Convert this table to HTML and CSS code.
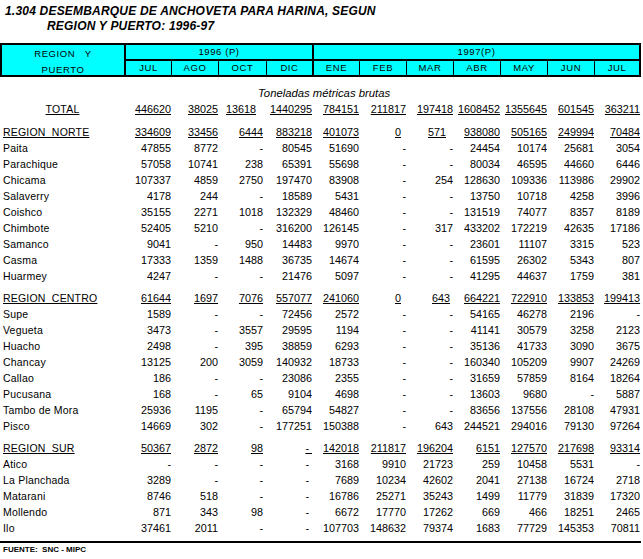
FILE: index.html
```html
<!DOCTYPE html>
<html lang="es">
<head>
<meta charset="utf-8">
<title>Desembarque de anchoveta para harina</title>
<link rel="stylesheet" href="styles.css">
</head>
<body>
<div class="page">
  <div class="title">
    <div class="t1">1.304 DESEMBARQUE DE ANCHOVETA PARA HARINA, SEGUN</div>
    <div class="t2">REGION Y PUERTO: 1996-97</div>
  </div>

  <div class="head">
    <div class="h-region">REGION   Y<br>PUERTO</div>
    <div class="h-year y96">1996 (P)</div>
    <div class="h-year y97">1997(P)</div>
    <div class="h-m thick">JUL</div>
    <div class="h-m">AGO</div>
    <div class="h-m">OCT</div>
    <div class="h-m">DIC</div>
    <div class="h-m thick">ENE</div>
    <div class="h-m">FEB</div>
    <div class="h-m">MAR</div>
    <div class="h-m">ABR</div>
    <div class="h-m">MAY</div>
    <div class="h-m">JUN</div>
    <div class="h-m">JUL</div>
  </div>

  <table class="data">
    <colgroup>
      <col class="c-lab"><col class="c-n46"><col class="c-n47"><col class="c-n47"><col class="c-n47"><col class="c-n47"><col class="c-n47"><col class="c-n47"><col class="c-n47"><col class="c-n47"><col class="c-n47"><col class="c-n46">
    </colgroup>
    <tbody>
      <tr class="units"><td colspan="12">Toneladas métricas brutas</td></tr>
      <tr class="sub"><td class="lab total">TOTAL</td><td>446620</td><td>38025</td><td class="oct far">13618</td><td>1440295</td><td>784151</td><td>211817</td><td>197418</td><td>1608452</td><td>1355645</td><td>601545</td><td>363211</td></tr>
      <tr class="gap g7"><td colspan="12"></td></tr>
      <tr class="sub"><td class="lab">REGION  NORTE</td><td>334609</td><td>33456</td><td class="oct">6444</td><td>883218</td><td>401073</td><td class="in5">0</td><td class="in7">571</td><td>938080</td><td>505165</td><td>249994</td><td>70484</td></tr>
      <tr><td class="lab">Paita</td><td>47855</td><td>8772</td><td class="oct">-</td><td>80545</td><td>51690</td><td>-</td><td>-</td><td>24454</td><td>10174</td><td>25681</td><td>3054</td></tr>
      <tr><td class="lab">Parachique</td><td>57058</td><td>10741</td><td class="oct">238</td><td>65391</td><td>55698</td><td>-</td><td>-</td><td>80034</td><td>46595</td><td>44660</td><td>6446</td></tr>
      <tr><td class="lab">Chicama</td><td>107337</td><td>4859</td><td class="oct">2750</td><td>197470</td><td>83908</td><td>-</td><td>254</td><td>128630</td><td>109336</td><td>113986</td><td>29902</td></tr>
      <tr><td class="lab">Salaverry</td><td>4178</td><td>244</td><td class="oct">-</td><td>18589</td><td>5431</td><td>-</td><td>-</td><td>13750</td><td>10718</td><td>4258</td><td>3996</td></tr>
      <tr><td class="lab">Coishco</td><td>35155</td><td>2271</td><td class="oct">1018</td><td>132329</td><td>48460</td><td>-</td><td>-</td><td>131519</td><td>74077</td><td>8357</td><td>8189</td></tr>
      <tr><td class="lab">Chimbote</td><td>52405</td><td>5210</td><td class="oct">-</td><td>316200</td><td>126145</td><td>-</td><td>317</td><td>433202</td><td>172219</td><td>42635</td><td>17186</td></tr>
      <tr><td class="lab">Samanco</td><td>9041</td><td>-</td><td class="oct">950</td><td>14483</td><td>9970</td><td>-</td><td>-</td><td>23601</td><td>11107</td><td>3315</td><td>523</td></tr>
      <tr><td class="lab">Casma</td><td>17333</td><td>1359</td><td class="oct">1488</td><td>36735</td><td>14674</td><td>-</td><td>-</td><td>61595</td><td>26302</td><td>5343</td><td>807</td></tr>
      <tr><td class="lab">Huarmey</td><td>4247</td><td>-</td><td class="oct">-</td><td>21476</td><td>5097</td><td>-</td><td>-</td><td>41295</td><td>44637</td><td>1759</td><td>381</td></tr>
      <tr class="gap g6"><td colspan="12"></td></tr>
      <tr class="sub"><td class="lab">REGION  CENTRO</td><td>61644</td><td>1697</td><td class="oct">7076</td><td>557077</td><td>241060</td><td class="in5">0</td><td class="in3">643</td><td>664221</td><td>722910</td><td>133853</td><td>199413</td></tr>
      <tr><td class="lab">Supe</td><td>1589</td><td>-</td><td class="oct">-</td><td>72456</td><td>2572</td><td>-</td><td>-</td><td>54165</td><td>46278</td><td>2196</td><td>-</td></tr>
      <tr><td class="lab">Vegueta</td><td>3473</td><td>-</td><td class="oct">3557</td><td>29595</td><td>1194</td><td>-</td><td>-</td><td>41141</td><td>30579</td><td>3258</td><td>2123</td></tr>
      <tr><td class="lab">Huacho</td><td>2498</td><td>-</td><td class="oct">395</td><td>38859</td><td>6293</td><td>-</td><td>-</td><td>35136</td><td>41733</td><td>3090</td><td>3675</td></tr>
      <tr><td class="lab">Chancay</td><td>13125</td><td>200</td><td class="oct">3059</td><td>140932</td><td>18733</td><td>-</td><td>-</td><td>160340</td><td>105209</td><td>9907</td><td>24269</td></tr>
      <tr><td class="lab">Callao</td><td>186</td><td>-</td><td class="oct">-</td><td>23086</td><td>2355</td><td>-</td><td>-</td><td>31659</td><td>57859</td><td>8164</td><td>18264</td></tr>
      <tr><td class="lab">Pucusana</td><td>168</td><td>-</td><td class="oct">65</td><td>9104</td><td>4698</td><td>-</td><td>-</td><td>13603</td><td>9680</td><td>-</td><td>5887</td></tr>
      <tr><td class="lab">Tambo de Mora</td><td>25936</td><td>1195</td><td class="oct">-</td><td>65794</td><td>54827</td><td>-</td><td>-</td><td>83656</td><td>137556</td><td>28108</td><td>47931</td></tr>
      <tr><td class="lab">Pisco</td><td>14669</td><td>302</td><td class="oct">-</td><td>177251</td><td>150388</td><td>-</td><td>643</td><td>244521</td><td>294016</td><td>79130</td><td>97264</td></tr>
      <tr class="gap g6"><td colspan="12"></td></tr>
      <tr class="sub"><td class="lab">REGION  SUR</td><td>50367</td><td>2872</td><td class="oct">98</td><td>-&nbsp;</td><td>142018</td><td>211817</td><td>196204</td><td>6151</td><td>127570</td><td>217698</td><td>93314</td></tr>
      <tr><td class="lab">Atico</td><td>-</td><td>-</td><td class="oct">-</td><td class="dash">-</td><td>3168</td><td>9910</td><td>21723</td><td>259</td><td>10458</td><td>5531</td><td>-</td></tr>
      <tr><td class="lab">La Planchada</td><td>3289</td><td>-</td><td class="oct">-</td><td class="dash">-</td><td>7689</td><td>10234</td><td>42602</td><td>2041</td><td>27138</td><td>16724</td><td>2718</td></tr>
      <tr><td class="lab">Matarani</td><td>8746</td><td>518</td><td class="oct">-</td><td class="dash">-</td><td>16786</td><td>25271</td><td>35243</td><td>1499</td><td>11779</td><td>31839</td><td>17320</td></tr>
      <tr><td class="lab">Mollendo</td><td>871</td><td>343</td><td class="oct">98</td><td class="dash">-</td><td>6672</td><td>17770</td><td>17262</td><td>669</td><td>466</td><td>18251</td><td>2465</td></tr>
      <tr><td class="lab">Ilo</td><td>37461</td><td>2011</td><td class="oct">-</td><td class="dash">-</td><td>107703</td><td>148632</td><td>79374</td><td>1683</td><td>77729</td><td>145353</td><td>70811</td></tr>
    </tbody>
  </table>

  <div class="rule"></div>
  <div class="source">FUENTE:  SNC - MIPC</div>
</div>
</body>
</html>
```

FILE: styles.css
```css
* { box-sizing: border-box; }

html, body {
  margin: 0;
  padding: 0;
  background: #ffffff;
  color: #000000;
  font-family: "Liberation Sans", Arial, sans-serif;
}

.page {
  width: 643px;
  padding-top: 4px;
}

.title {
  font-size: 12px;
  font-weight: bold;
  font-style: italic;
  line-height: 15px;
  letter-spacing: 0.2px;
}
.t1 { padding-left: 5px; }
.t2 { padding-left: 47px; }

.head {
  margin-top: 9px;
  width: 641px;
  display: grid;
  grid-template-columns: 122px 47px 47px 48px 46px 47px 47px 47px 47px 47px 47px 45px;
  grid-template-rows: 16px 14px;
  border: 2px solid #000;
  background: #00ffff;
  font-size: 9.5px;
  letter-spacing: 0.6px;
  text-align: center;
}
.h-region {
  grid-column: 1;
  grid-row: 1 / 3;
  white-space: pre;
  line-height: 16px;
  padding-top: 1px;
}
.h-year {
  grid-row: 1;
  border-left: 2px solid #000;
  border-bottom: 2px solid #000;
  line-height: 14px;
}
.y96 { grid-column: 2 / 6; }
.y97 { grid-column: 6 / 13; }
.h-m {
  grid-row: 2;
  border-left: 1px solid #000;
  line-height: 14px;
}
.h-m.thick { border-left-width: 2px; }

.data {
  margin-top: 8px;
  width: 640px;
  table-layout: fixed;
  border-collapse: collapse;
  border-spacing: 0;
}
.c-lab { width: 125px; }
.c-n46 { width: 46px; }
.c-n47 { width: 47px; }

.data td {
  padding: 0;
  height: 16px;
  line-height: 16px;
  font-size: 10.8px;
  text-align: right;
  white-space: pre;
}
.data td.lab {
  text-align: left;
  padding-left: 3px;
  font-size: 10.5px;
  letter-spacing: 0.2px;
}
.data td.total {
  text-align: center;
  padding-left: 0;
}
.data td.oct { padding-right: 2px; }
.data td.far { padding-right: 9px; }
.data td.in5 { padding-right: 5px; }
.data td.in7 { padding-right: 7px; }
.data td.in3 { padding-right: 3px; }
.data td.dash { padding-right: 3px; }

.sub td { text-decoration: underline; }

.units td {
  text-align: left;
  padding-left: 258px;
  font-style: italic;
  font-size: 11.3px;
}

.gap td { height: 7px; line-height: 0; }
.gap.g6 td { height: 6px; }

.rule {
  margin-top: 5px;
  width: 641px;
  border-top: 2px solid #000;
}

.source {
  margin-top: 2px;
  padding-left: 3px;
  font-size: 8px;
  font-weight: bold;
  line-height: 10px;
  white-space: pre;
  letter-spacing: 0;
}
```
